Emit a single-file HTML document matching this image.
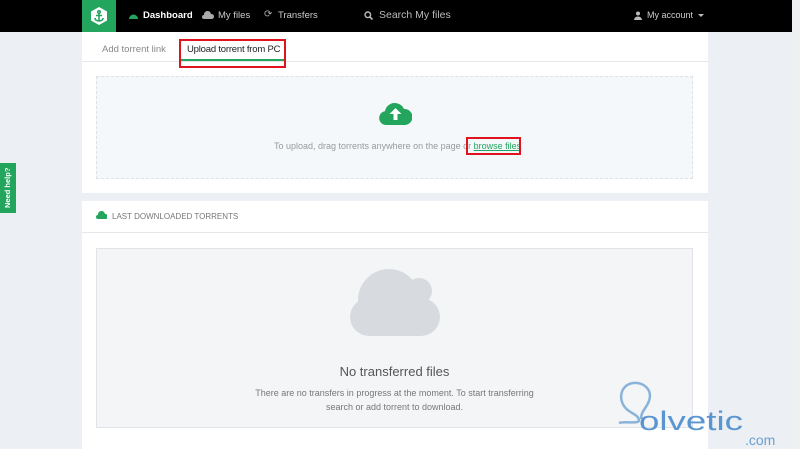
<!DOCTYPE html>
<html><head><meta charset="utf-8"><style>
*{margin:0;padding:0;box-sizing:border-box}
body{width:800px;height:449px;overflow:hidden;background:#eceff3;font-family:"Liberation Sans",sans-serif;position:relative}
.abs{position:absolute}
.top{left:0;top:0;width:792px;height:32px;background:#000}
.nav{color:#ccc;font-size:9.5px;top:10px}
.sb{left:792px;top:0;width:8px;height:449px;background:#eef0f2}
</style></head><body>
<div class="abs top"></div>
<div class="abs" style="left:82px;top:0;width:34px;height:32px;background:#23a55e"></div>
<svg class="abs" style="left:89px;top:6px" width="20" height="20" viewBox="0 0 20 20"><polygon points="10,1 18,5.5 18,14.5 10,19 2,14.5 2,5.5" fill="#fff"/><g stroke="#23a55e" stroke-width="1.6" fill="none"><circle cx="10" cy="6" r="1.3"/><path d="M10 7.5V15M7 9.5h6M6 12c0 2 2 3 4 3s4-1 4-3"/></g></svg>
<svg class="abs" style="left:128px;top:11px" width="11" height="9" viewBox="0 0 11 9"><path d="M1 8A4.5 4.5 0 1 1 10 8Z" fill="#23a55e"/></svg>
<div class="abs nav" style="left:143px;color:#fff;font-weight:bold">Dashboard</div>
<svg class="abs" style="left:202px;top:11px" width="12" height="8"><path d="M2 8a2 2 0 0 1 0-4a3.5 3.5 0 0 1 7-1a2.5 2.5 0 0 1 1 5z" fill="#aaa"/></svg>
<div class="abs nav" style="left:218px">My files</div>
<div class="abs nav" style="left:264px;font-size:10px;top:9px;color:#aaa">⟳</div>
<div class="abs nav" style="left:278px">Transfers</div>
<svg class="abs" style="left:364px;top:11px" width="9" height="9"><circle cx="3.8" cy="3.8" r="2.8" stroke="#bbb" stroke-width="1.4" fill="none"/><path d="M6 6l2.5 2.5" stroke="#bbb" stroke-width="1.6"/></svg>
<div class="abs nav" style="left:379px;top:9px;font-size:10.5px;color:#bbb">Search My files</div>
<svg class="abs" style="left:634px;top:11px" width="8" height="9"><circle cx="4" cy="2.5" r="2" fill="#bbb"/><path d="M0 9a4 3.5 0 0 1 8 0z" fill="#bbb"/></svg>
<div class="abs nav" style="left:647px;font-size:9px">My account</div>
<svg class="abs" style="left:698px;top:14px" width="6" height="4"><path d="M0 0h6L3 3z" fill="#bbb"/></svg>
<div class="abs sb"></div>

<div class="abs" style="left:82px;top:32px;width:626px;height:161px;background:#fff"></div>
<div class="abs" style="left:82px;top:61px;width:626px;height:1px;background:#e4e6ea"></div>
<div class="abs" style="left:102px;top:44px;font-size:9.5px;color:#888">Add torrent link</div>
<div class="abs" style="left:187px;top:44px;font-size:9.5px;color:#222;letter-spacing:-0.2px">Upload torrent from PC</div>
<div class="abs" style="left:181px;top:59px;width:103px;height:2px;background:#23a55e"></div>
<div class="abs" style="left:179px;top:39px;width:107px;height:29px;border:2px solid #e0141e"></div>
<div class="abs" style="left:96px;top:76px;width:597px;height:103px;background:#f5f8fa;border:1px dashed #dde2e6"></div>
<svg class="abs" style="left:379px;top:101px" width="33" height="24" viewBox="0 0 33 24"><path d="M7 24a7 7 0 0 1-1-13.9A10 10 0 0 1 25 8a8 8 0 0 1 1 16z" fill="#23a55e"/><path d="M16.5 7l-6 6h4v6h4v-6h4z" fill="#fff"/></svg>
<div class="abs" style="left:274px;top:141px;font-size:9px;color:#999">To upload, drag torrents anywhere on the page or <span style="color:#23a55e;text-decoration:underline">browse files</span></div>
<div class="abs" style="left:466px;top:137px;width:55px;height:18px;border:2px solid #e0141e"></div>

<div class="abs" style="left:82px;top:201px;width:626px;height:248px;background:#fff"></div>
<div class="abs" style="left:82px;top:232px;width:626px;height:1px;background:#e4e6ea"></div>
<svg class="abs" style="left:96px;top:211px" width="11" height="8"><path d="M2 8a2 2 0 0 1 0-4a3.5 3.5 0 0 1 7-1a2.5 2.5 0 0 1 1 5z" fill="#23a55e"/></svg>
<div class="abs" style="left:112px;top:212px;font-size:8px;color:#777">LAST DOWNLOADED TORRENTS</div>
<div class="abs" style="left:96px;top:248px;width:597px;height:180px;background:#f4f5f7;border:1px solid #e1e3e6"></div>
<svg class="abs" style="left:350px;top:269px" width="90" height="67"><circle cx="39" cy="31" r="31" fill="#d7dbe0"/><circle cx="69" cy="22" r="13" fill="#d7dbe0"/><rect x="0" y="29" width="90" height="38" rx="19" fill="#d7dbe0"/></svg>
<div class="abs" style="left:96px;top:364px;width:597px;text-align:center;font-size:13px;color:#555">No transferred files</div>
<div class="abs" style="left:96px;top:386px;width:597px;text-align:center;font-size:9px;line-height:14px;color:#777">There are no transfers in progress at the moment. To start transferring<br>search or add torrent to download.</div>

<div class="abs" style="left:0;top:163px;width:16px;height:50px;background:#23a55e"></div>
<div class="abs" style="left:2px;top:164px;width:12px;height:48px;writing-mode:vertical-rl;transform:rotate(180deg);font-size:7.5px;color:#fff;white-space:nowrap;font-weight:bold;text-align:center;line-height:12px">Need help?</div>

<svg class="abs" style="left:615px;top:380px" width="170" height="69"><path d="M18 3c-14 2-16 20-4 28 6 4 10 5 10 10-3 3-14 0-20 2" stroke="#8ab3d9" stroke-width="2.5" fill="none"/><path d="M18 3c10-1 20 6 16 18-3 8-8 10-8 18" stroke="#8ab3d9" stroke-width="2.5" fill="none"/><text x="24" y="50" font-family="Liberation Sans,sans-serif" font-size="27" fill="#5a95cf" textLength="104" lengthAdjust="spacingAndGlyphs">olvetic</text><text x="130" y="65" font-family="Liberation Sans,sans-serif" font-size="14" fill="#6b9fd1">.com</text></svg>
</body></html>
